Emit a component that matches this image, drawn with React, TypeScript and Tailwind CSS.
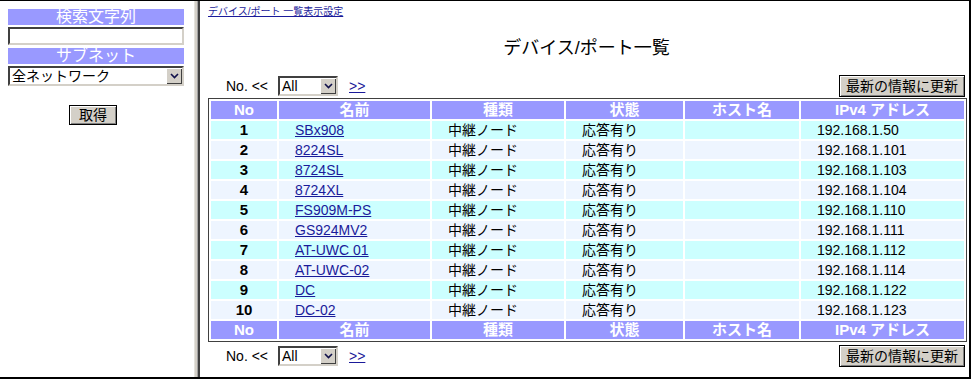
import React from 'react';

const devices = [
  { no: 1, name: 'SBx908', ip: '192.168.1.50' },
  { no: 2, name: '8224SL', ip: '192.168.1.101' },
  { no: 3, name: '8724SL', ip: '192.168.1.103' },
  { no: 4, name: '8724XL', ip: '192.168.1.104' },
  { no: 5, name: 'FS909M-PS', ip: '192.168.1.110' },
  { no: 6, name: 'GS924MV2', ip: '192.168.1.111' },
  { no: 7, name: 'AT-UWC 01', ip: '192.168.1.112' },
  { no: 8, name: 'AT-UWC-02', ip: '192.168.1.114' },
  { no: 9, name: 'DC', ip: '192.168.1.122' },
  { no: 10, name: 'DC-02', ip: '192.168.1.123' },
];

const font = { fontFamily: '"Liberation Sans", "Noto Sans CJK JP", sans-serif' };

function DropArrow() {
  return (
    <span className="flex items-center justify-center w-[16px] h-[16px] bg-[#d4d0c8] shrink-0 shadow-[inset_1px_1px_0_#fff,inset_-1px_-1px_0_#404040]">
      <svg width="9" height="6" viewBox="0 0 9 6">
        <path d="M1 1 L4.5 4.5 L8 1" fill="none" stroke="#10104a" strokeWidth="1.6" />
      </svg>
    </span>
  );
}

function Select({ value, className }: { value: string; className: string }) {
  return (
    <div
      className={`flex items-center bg-white border-2 border-t-[#404040] border-l-[#404040] border-r-[#d4d0c8] border-b-[#d4d0c8] ${className}`}
    >
      <span className="flex-1 pl-[2px] text-[14px] leading-[16px] text-black">{value}</span>
      <DropArrow />
    </div>
  );
}

function ClassicButton({ label, className }: { label: string; className: string }) {
  return (
    <button
      className={`border border-black bg-[#d4d0c8] text-[14px] leading-[18px] text-black shadow-[inset_1px_1px_0_#fff,inset_-1px_-1px_0_#808080] ${className}`}
    >
      {label}
    </button>
  );
}

function Pager({ className }: { className: string }) {
  return (
    <div className={`flex items-center h-[22px] ${className}`}>
      <span className="ml-[18px] text-[14px] text-black w-[52px]">No. &lt;&lt;</span>
      <Select value="All" className="w-[60px] h-[20px]" />
      <a href="#" className="ml-[11px] text-[14px] underline text-[#1a1a9a]">
        &gt;&gt;
      </a>
      <ClassicButton label="最新の情報に更新" className="ml-auto mr-[4px] w-[126px] h-[22px]" />
    </div>
  );
}

function HeaderRow() {
  const cols = ['No', '名前', '種類', '状態', 'ホスト名', 'IPv4 アドレス'];
  return (
    <tr>
      {cols.map((c) => (
        <td
          key={c}
          className="bg-[#9999ff] text-white font-bold text-[15px] text-center h-[18px] leading-[18px] p-0"
        >
          {c}
        </td>
      ))}
    </tr>
  );
}

export default function App() {
  return (
    <div
      className="flex w-[971px] h-[379px] bg-white border-t border-t-black border-r-2 border-r-black border-b-2 border-b-black overflow-hidden"
      style={font}
    >
      {/* Left frame */}
      <div className="w-[194px] shrink-0 pt-[8px] pl-[8px]">
        <div className="w-[176px] h-[16px] bg-[#9999ff] text-white text-[16px] leading-[16px] text-center">
          検索文字列
        </div>
        <div className="mt-[2px] w-[176px] h-[18px] bg-white border-2 border-t-[#404040] border-l-[#404040] border-r-[#d4d0c8] border-b-[#d4d0c8]" />
        <div className="mt-[3px] w-[176px] h-[16px] bg-[#9999ff] text-white text-[16px] leading-[16px] text-center">
          サブネット
        </div>
        <Select value="全ネットワーク" className="mt-[2px] w-[176px] h-[20px]" />
        <ClassicButton label="取得" className="mt-[19px] ml-[61px] w-[48px] h-[20px]" />
      </div>

      {/* Frame divider */}
      <div className="w-[6px] shrink-0 flex">
        <div className="w-[1px] bg-[#e4e2dc]" />
        <div className="w-[2px] bg-[#d4d0c8]" />
        <div className="w-[1px] bg-[#a0a0a0]" />
        <div className="w-[2px] bg-[#404040]" />
      </div>

      {/* Main frame */}
      <div className="flex-1 pl-[8px] pt-[4px]">
        <a href="#" className="block text-[10px] leading-[13px] underline text-[#1a1a9a] w-fit">
          デバイス/ポート 一覧表示設定
        </a>
        <h1 className="mt-[19px] text-center text-[18px] leading-[22px] text-black pr-[4px]">
          デバイス/ポート一覧
        </h1>
        <Pager className="mt-[16px]" />
        <table className="mt-[1px] w-[759px] border-separate border-spacing-[2px] border border-[#404040] text-black">
          <colgroup>
            <col className="w-[66px]" />
            <col className="w-[151px]" />
            <col className="w-[132px]" />
            <col className="w-[117px]" />
            <col className="w-[114px]" />
            <col className="w-[163px]" />
          </colgroup>
          <tbody>
            <HeaderRow />
            {devices.map((d) => {
              const bg = d.no % 2 === 1 ? 'bg-[#ccffff]' : 'bg-[#eef5ff]';
              return (
                <tr key={d.no}>
                  <td className={`${bg} h-[18px] p-0 text-center font-bold text-[15px] leading-[18px]`}>{d.no}</td>
                  <td className={`${bg} h-[18px] p-0 pl-[16px] text-[14px] leading-[18px]`}>
                    <a href="#" className="underline text-[#1a1a9a]">
                      {d.name}
                    </a>
                  </td>
                  <td className={`${bg} h-[18px] p-0 pl-[16px] text-[14px] leading-[18px]`}>中継ノード</td>
                  <td className={`${bg} h-[18px] p-0 pl-[16px] text-[14px] leading-[18px]`}>応答有り</td>
                  <td className={`${bg} h-[18px] p-0`} />
                  <td className={`${bg} h-[18px] p-0 pl-[16px] text-[14px] leading-[18px]`}>{d.ip}</td>
                </tr>
              );
            })}
            <HeaderRow />
          </tbody>
        </table>
        <Pager className="mt-[3px]" />
      </div>
    </div>
  );
}
